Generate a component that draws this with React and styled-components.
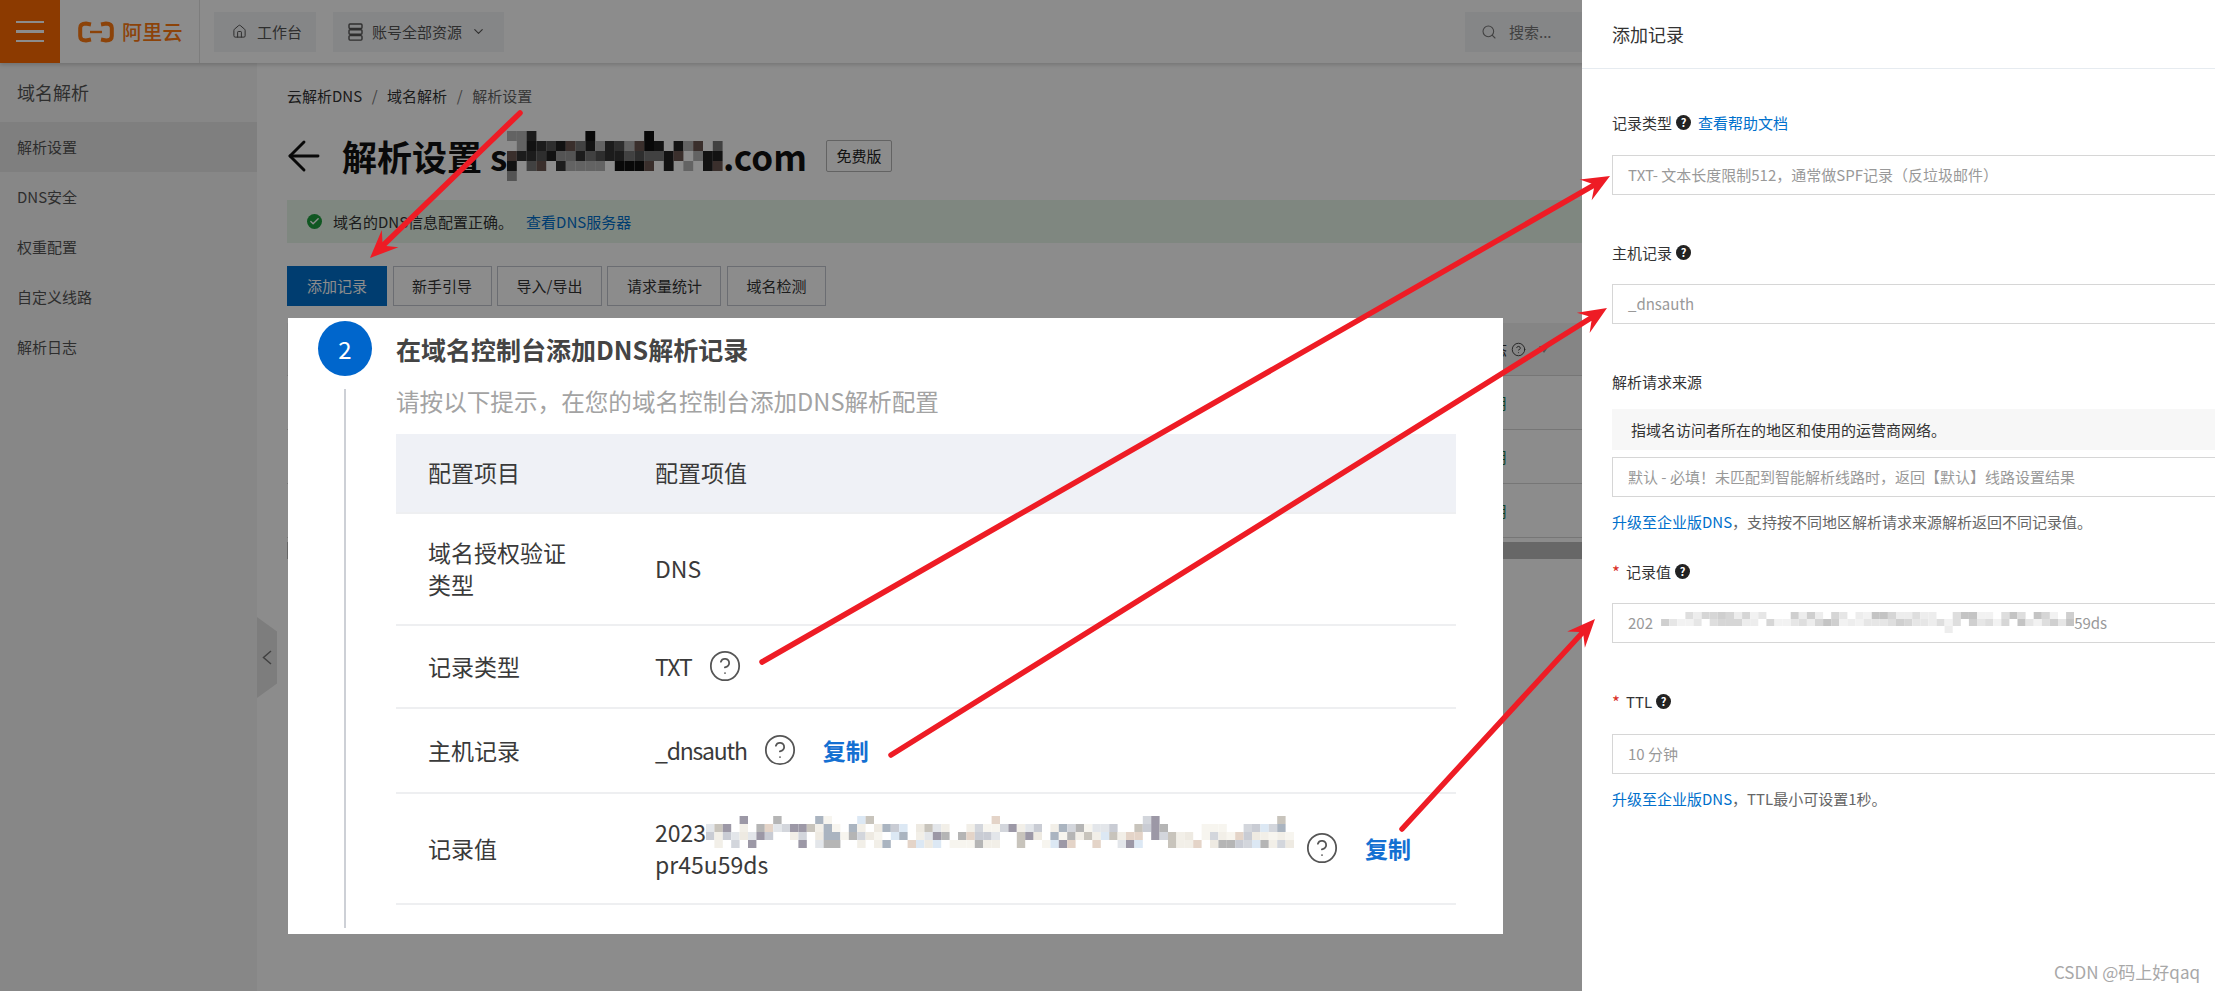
import React from 'react'
import styled, { createGlobalStyle } from 'styled-components'
import { Home, Search, ChevronDown, ArrowLeft, CircleHelp, Check } from 'lucide-react'

const GlobalStyle = createGlobalStyle`
  html, body {
    margin: 0;
    padding: 0;
    background: #fff;
  }
  * {
    box-sizing: border-box;
  }
`

const sideItems = ['解析设置', 'DNS安全', '权重配置', '自定义线路', '解析日志']
const actions = ['添加记录', '新手引导', '导入/导出', '请求量统计', '域名检测']

const arrows = [
  [[520, 113], [370, 258]],
  [[762, 662], [1610, 176]],
  [[891, 755], [1607, 308]],
  [[1402, 829], [1595, 619]],
]

// fake pixelation, same blocks on every render
const Mosaic = ({ cols, rows, cellW, cellH, palette, seed, density }) => {
  let s = seed
  const next = () => {
    s = (s * 1103515245 + 12345) % 2147483648
    return s / 2147483648
  }
  const cells = []
  for (let r = 0; r < rows; r++) {
    for (let c = 0; c < cols; c++) {
      const hit = next()
      const pick = next()
      if (hit < density[r]) {
        cells.push(
          <rect
            key={`${r}-${c}`}
            x={c * cellW}
            y={r * cellH}
            width={cellW}
            height={cellH}
            fill={palette[Math.floor(pick * palette.length)]}
          />
        )
      }
    }
  }
  return (
    <svg width={cols * cellW} height={rows * cellH} style={{ display: 'block', flex: 'none' }}>
      {cells}
    </svg>
  )
}

const Arrow = ({ from, to }) => {
  const len = Math.hypot(to[0] - from[0], to[1] - from[1])
  const dx = (to[0] - from[0]) / len
  const dy = (to[1] - from[1]) / len
  const at = (back, side) => `${to[0] - dx * back - dy * side},${to[1] - dy * back + dx * side}`
  return (
    <g>
      <line
        x1={from[0]}
        y1={from[1]}
        x2={to[0] - dx * 18}
        y2={to[1] - dy * 18}
        stroke="#ee1c25"
        strokeWidth="5.5"
        strokeLinecap="round"
      />
      <polygon
        fill="#ee1c25"
        points={[at(0, 0), at(28, 12), at(20, 2.7), at(20, -2.7), at(28, -12)].join(' ')}
      />
    </g>
  )
}

const Hint = () => <HintDot>?</HintDot>

const HelpIcon = () => <CircleHelp size={34} strokeWidth={1.25} color="#555" />

const App = () => (
  <Page>
    <GlobalStyle />

    <TopBar>
      <MenuButton>
        <MenuLine />
        <MenuLine />
        <MenuLine />
      </MenuButton>
      <Logo>
        <svg width="36" height="22" viewBox="0 0 36 22" fill="none" stroke="#ff7a12" strokeWidth="4">
          <path d="M13 3.5 L8 2.5 Q2.2 2.5 2.2 7 V15 Q2.2 19.5 8 19.5 L13 18.5" />
          <path d="M23 3.5 L28 2.5 Q33.8 2.5 33.8 7 V15 Q33.8 19.5 28 19.5 L23 18.5" />
          <path d="M12 11 H24" strokeWidth="2.4" />
        </svg>
        <LogoText>阿里云</LogoText>
      </Logo>
      <NavButton>
        <Home size={15} strokeWidth={1.6} />
        工作台
      </NavButton>
      <NavButton $wide>
        <svg width="15" height="18" viewBox="0 0 15 18" fill="none" stroke="#555" strokeWidth="1.4">
          <rect x="1" y="1" width="13" height="4.5" rx="1" />
          <rect x="1" y="6.8" width="13" height="4.5" rx="1" />
          <rect x="1" y="12.6" width="13" height="4.5" rx="1" />
        </svg>
        账号全部资源
        <ChevronDown size={15} strokeWidth={1.8} />
      </NavButton>
      <SearchBox>
        <Search size={16} strokeWidth={1.6} />
        搜索...
      </SearchBox>
    </TopBar>

    <Body>
      <Sidebar>
        <SideTitle>域名解析</SideTitle>
        {sideItems.map((item, i) => (
          <SideItem key={item} $active={i === 0}>{item}</SideItem>
        ))}
      </Sidebar>

      <Main>
        <Breadcrumb>
          云解析DNS<Slash>/</Slash>域名解析<Slash>/</Slash><Current>解析设置</Current>
        </Breadcrumb>

        <TitleRow>
          <BackArrow>
            <ArrowLeft size={48} strokeWidth={1.45} />
          </BackArrow>
          <Heading>解析设置 s</Heading>
          <Mosaic
            cols={22}
            rows={5}
            cellW={9.8}
            cellH={10}
            seed={41}
            density={[0.25, 0.75, 0.95, 0.7, 0.12]}
            palette={['#111', '#222', '#333', '#555', '#6b5650', '#777', '#9a9a9a', '#b5b5b5']}
          />
          <Heading>.com</Heading>
          <Badge>免费版</Badge>
        </TitleRow>

        <Notice>
          <CheckDot>
            <Check size={11} strokeWidth={3} color="#fff" />
          </CheckDot>
          域名的DNS信息配置正确。
          <NoticeLink>查看DNS服务器</NoticeLink>
        </Notice>

        <Toolbar>
          {actions.map((label, i) => (
            <ToolButton key={label} $primary={i === 0}>{label}</ToolButton>
          ))}
        </Toolbar>

        <RecordHead>
          <StatusCell>
            状态
            <CircleHelp size={15} strokeWidth={1.4} />
            <SortMark />
          </StatusCell>
        </RecordHead>
        {[1, 2, 3].map(n => (
          <RecordRow key={n}>
            <StatusCell $on>启用</StatusCell>
          </RecordRow>
        ))}
        <ScrollBar />
      </Main>
    </Body>

    <CollapseHandle>
      <svg width="10" height="15" viewBox="0 0 10 15" fill="none" stroke="#777" strokeWidth="1.5">
        <path d="M9 1 L1.5 7.5 L9 14" />
      </svg>
    </CollapseHandle>

    <Mask />

    <GuideCard>
      <StepHead>
        <StepNumber>2</StepNumber>
        <StepTitle>在域名控制台添加DNS解析记录</StepTitle>
      </StepHead>
      <StepBody>
        <StepHint>请按以下提示，在您的域名控制台添加DNS解析配置</StepHint>
        <ConfigTable>
          <ConfigRow $height={80} $head>
            <div>配置项目</div>
            <div>配置项值</div>
          </ConfigRow>
          <ConfigRow $height={112}>
            <ConfigLabel>域名授权验证类型</ConfigLabel>
            <ConfigValue>DNS</ConfigValue>
          </ConfigRow>
          <ConfigRow $height={83}>
            <ConfigLabel>记录类型</ConfigLabel>
            <ConfigValue>
              <NarrowText $amount={-1}>TXT</NarrowText>
              <HelpIcon />
            </ConfigValue>
          </ConfigRow>
          <ConfigRow $height={85}>
            <ConfigLabel>主机记录</ConfigLabel>
            <ConfigValue>
              <NarrowText $amount={-1.2}>_dnsauth</NarrowText>
              <HelpIcon />
              <CopyLink $offset={10}>复制</CopyLink>
            </ConfigValue>
          </ConfigRow>
          <ConfigRow $height={111}>
            <ConfigLabel>记录值</ConfigLabel>
            <ConfigValue $tight>
              <LongValue>
                <LongLine>
                  2023
                  <Mosaic
                    cols={70}
                    rows={4}
                    cellW={8.4}
                    cellH={8}
                    seed={7}
                    density={[0.18, 0.8, 0.85, 0.6]}
                    palette={['#f7f5ef', '#f2efe8', '#eeeae2', '#e3e6ea', '#dce8f4', '#d3d6dc', '#c9ccd4', '#c8c4bc', '#b5b5b5', '#aab4c0', '#e4d4c8', '#9c98a6']}
                  />
                </LongLine>
                <div>pr45u59ds</div>
              </LongValue>
              <HelpIcon />
              <CopyLink $offset={14}>复制</CopyLink>
            </ConfigValue>
          </ConfigRow>
        </ConfigTable>
      </StepBody>
    </GuideCard>

    <Drawer>
      <DrawerHead>添加记录</DrawerHead>
      <DrawerBody>
        <Field>
          <FieldLabel $gap={20}>
            记录类型
            <Hint />
            <FieldLink>查看帮助文档</FieldLink>
          </FieldLabel>
          <InputBox>TXT- 文本长度限制512，通常做SPF记录（反垃圾邮件）</InputBox>
        </Field>

        <Field>
          <FieldLabel>
            主机记录
            <Hint />
          </FieldLabel>
          <InputBox>_dnsauth</InputBox>
        </Field>

        <Field $bottom={29}>
          <FieldLabel $gap={15}>解析请求来源</FieldLabel>
          <SourceNote>指域名访问者所在的地区和使用的运营商网络。</SourceNote>
          <InputBox>默认 - 必填！未匹配到智能解析线路时，返回【默认】线路设置结果</InputBox>
          <HelpText>
            <FieldLink>升级至企业版DNS</FieldLink>，支持按不同地区解析请求来源解析返回不同记录值。
          </HelpText>
        </Field>

        <Field $bottom={49}>
          <FieldLabel>
            <Required>*</Required>
            记录值
            <Hint />
          </FieldLabel>
          <InputBox>
            202
            <Mosaic
              cols={52}
              rows={3}
              cellW={8.1}
              cellH={7}
              seed={19}
              density={[0.72, 0.95, 0.06]}
              palette={['#f2f2f2', '#ededed', '#e6e6e6', '#dedede', '#d6d6d6', '#cfcfcf', '#c4c4c4']}
            />
            59ds
          </InputBox>
        </Field>

        <Field>
          <FieldLabel $gap={20}>
            <Required>*</Required>
            TTL
            <Hint />
          </FieldLabel>
          <InputBox>10 分钟</InputBox>
          <HelpText>
            <FieldLink>升级至企业版DNS</FieldLink>，TTL最小可设置1秒。
          </HelpText>
        </Field>
      </DrawerBody>
    </Drawer>

    <ArrowLayer width="2215" height="991">
      {arrows.map(([from, to], i) => (
        <Arrow key={i} from={from} to={to} />
      ))}
    </ArrowLayer>

    <Watermark>CSDN @码上好qaq</Watermark>
  </Page>
)

export default App

const fontStack = '"Noto Sans CJK SC", "Noto Sans", sans-serif'

const Page = styled.div`
  position: relative;
  width: 2215px;
  height: 991px;
  overflow: hidden;
  display: flex;
  flex-direction: column;
  font-family: ${fontStack};
  font-size: 15px;
  color: #333;
`

const TopBar = styled.header`
  position: relative;
  z-index: 1;
  flex: none;
  display: flex;
  align-items: center;
  height: 63px;
  background: #fff;
  box-shadow: 0 2px 4px rgba(0, 0, 0, 0.16);
`

const MenuButton = styled.div`
  display: flex;
  flex-direction: column;
  justify-content: center;
  gap: 7px;
  width: 60px;
  height: 63px;
  padding: 0 16px;
  background: #ff6a00;
`

const MenuLine = styled.div`
  height: 2.5px;
  background: #fff;
`

const Logo = styled.div`
  display: flex;
  align-items: center;
  gap: 8px;
  width: 140px;
  height: 63px;
  padding-left: 18px;
  border-right: 1px solid #e3e3e3;
`

const LogoText = styled.span`
  font-size: 20px;
  line-height: 22px;
  font-weight: 500;
  letter-spacing: 0.3px;
  color: #ff7a12;
`

const NavButton = styled.div`
  display: flex;
  align-items: center;
  gap: ${p => (p.$wide ? '9px' : '10px')};
  width: ${p => (p.$wide ? '171px' : '102px')};
  height: 40px;
  margin-left: ${p => (p.$wide ? '17px' : '14px')};
  padding-left: ${p => (p.$wide ? '15px' : '18px')};
  background: #f3f4f6;
  font-size: 15px;
  color: #555;
`

const SearchBox = styled.div`
  display: flex;
  align-items: center;
  gap: 12px;
  width: 750px;
  height: 40px;
  margin-left: auto;
  padding-left: 16px;
  background: #f3f4f6;
  color: #777;
`

const Body = styled.div`
  flex: 1;
  display: flex;
  min-height: 0;
`

const Sidebar = styled.nav`
  flex: none;
  width: 257px;
  background: #f6f6f6;
`

const SideTitle = styled.div`
  height: 59px;
  padding-left: 17px;
  font-size: 18px;
  line-height: 59px;
  color: #555;
`

const SideItem = styled.div`
  height: 50px;
  padding-left: 17px;
  line-height: 50px;
  color: #555;
  background: ${p => (p.$active ? '#e8e8e8' : 'transparent')};
`

const Main = styled.main`
  flex: 1;
  min-width: 0;
  padding: 21px 0 0 30px;
`

const Breadcrumb = styled.div`
  display: flex;
  align-items: center;
  height: 22px;
  color: #333;
`

const Slash = styled.span`
  width: 25px;
  text-align: center;
  color: #777;
`

const Current = styled.span`
  color: #666;
`

const TitleRow = styled.div`
  display: flex;
  align-items: center;
  height: 38px;
  margin-top: 31px;
`

const BackArrow = styled.span`
  display: flex;
  margin: 0 14px 0 -7px;
  color: #111;
`

const Heading = styled.h1`
  margin: 0;
  font-size: 35px;
  line-height: 38px;
  font-weight: 700;
  color: #111;
  white-space: pre;
`

const Badge = styled.div`
  width: 66px;
  height: 32px;
  margin-left: 19px;
  border: 1px solid #b4b4b4;
  border-radius: 2px;
  text-align: center;
  line-height: 30px;
  color: #222;
`

const Notice = styled.div`
  display: flex;
  align-items: center;
  height: 43px;
  margin-top: 25px;
  padding-left: 20px;
  background: #e8f6e9;
`

const CheckDot = styled.span`
  display: flex;
  align-items: center;
  justify-content: center;
  width: 15px;
  height: 15px;
  margin-right: 11px;
  border-radius: 50%;
  background: #1e9e3e;
`

const NoticeLink = styled.span`
  margin-left: 13px;
  color: #0070cc;
`

const Toolbar = styled.div`
  display: flex;
  gap: 5.5px;
  height: 40px;
  margin-top: 23px;
`

const ToolButton = styled.div`
  padding: 0 ${p => (p.$primary ? '19px' : '18.5px')};
  border: 1px solid ${p => (p.$primary ? '#0070cc' : '#c4c6cf')};
  background: ${p => (p.$primary ? '#0070cc' : 'transparent')};
  line-height: 38px;
  color: ${p => (p.$primary ? '#fff' : '#333')};
`

const RecordHead = styled.div`
  display: flex;
  align-items: center;
  height: 53px;
  margin-top: 17px;
  border-bottom: 1px solid #d8d8d8;
  background: #f2f2f2;
`

const RecordRow = styled.div`
  display: flex;
  align-items: center;
  height: 54px;
  border-bottom: 1px solid #d8d8d8;
`

const StatusCell = styled.div`
  display: flex;
  align-items: center;
  gap: 4px;
  margin-left: 1190px;
  color: ${p => (p.$on ? '#1a7a4a' : '#333')};
`

const SortMark = styled.span`
  margin-left: 9px;
  border-top: 7px solid #999;
  border-left: 5px solid transparent;
  border-right: 5px solid transparent;
`

const ScrollBar = styled.div`
  height: 17px;
  margin-top: 4px;
  background: #bcbcbc;
`

const CollapseHandle = styled.div`
  position: absolute;
  top: 617px;
  left: 257px;
  display: flex;
  align-items: center;
  justify-content: center;
  width: 20px;
  height: 81px;
  background: #e4e4e4;
  clip-path: polygon(0 0, 100% 18%, 100% 82%, 0 100%);
`

const Mask = styled.div`
  position: absolute;
  inset: 0;
  z-index: 2;
  background: rgba(0, 0, 0, 0.45);
`

const GuideCard = styled.section`
  position: absolute;
  top: 318px;
  left: 288px;
  z-index: 3;
  width: 1215px;
  padding: 3px 0 6px 30px;
  background: #fff;
`

const StepHead = styled.div`
  display: flex;
  align-items: center;
  gap: 24px;
`

const StepNumber = styled.div`
  width: 54px;
  height: 55px;
  border-radius: 50%;
  background: #0066cc;
  text-align: center;
  font-size: 24px;
  line-height: 55px;
  color: #fff;
`

const StepTitle = styled.h2`
  margin: 0;
  font-size: 25px;
  line-height: 34px;
  font-weight: 700;
  color: #444;
`

const StepBody = styled.div`
  margin: 23px 0 0 26px;
  padding: 0 47px 23px 50px;
  border-left: 2px solid #cdd0d6;
`

const StepHint = styled.p`
  margin: -10px 0 0;
  font-size: 23.6px;
  line-height: 24px;
  color: #a3a3a3;
`

const ConfigTable = styled.div`
  margin-top: 21px;
  font-size: 23px;
  color: #3a3a3a;
`

const ConfigRow = styled.div`
  display: grid;
  grid-template-columns: 227px 1fr;
  align-items: center;
  height: ${p => p.$height}px;
  padding: 0 0 2px 32px;
  border-bottom: 2px solid #eeeff1;
  background: ${p => (p.$head ? '#eff1f6' : 'transparent')};
`

const ConfigLabel = styled.div`
  width: 150px;
  line-height: 32px;
`

const ConfigValue = styled.div`
  display: flex;
  align-items: center;
  gap: ${p => (p.$tight ? '12px' : '16px')};
  line-height: 32px;
`

const NarrowText = styled.span`
  letter-spacing: ${p => p.$amount}px;
`

const LongValue = styled.div`
  width: 638px;
`

const LongLine = styled.div`
  display: flex;
  align-items: center;
`

const CopyLink = styled.span`
  margin-left: ${p => p.$offset}px;
  font-weight: 700;
  color: #1470d2;
`

const Drawer = styled.aside`
  position: absolute;
  top: 0;
  right: 0;
  bottom: 0;
  z-index: 4;
  width: 633px;
  overflow: hidden;
  background: #fff;
`

const DrawerHead = styled.div`
  height: 69px;
  padding-left: 30px;
  border-bottom: 1px solid #e6ebf0;
  font-size: 18px;
  line-height: 68px;
  color: #333;
`

const DrawerBody = styled.div`
  margin-right: -20px;
  padding: 44px 0 0 30px;
`

const Field = styled.div`
  margin-bottom: ${p => p.$bottom ?? 48}px;
`

const FieldLabel = styled.div`
  display: flex;
  align-items: center;
  gap: 4px;
  height: 22px;
  padding-bottom: 3px;
  margin-bottom: ${p => p.$gap ?? 19}px;
  color: #333;
`

const Required = styled.span`
  margin-right: 2px;
  font-size: 17px;
  line-height: 22px;
  color: #d93026;
`

const HintDot = styled.span`
  display: inline-block;
  width: 15px;
  height: 15px;
  border-radius: 50%;
  background: #222;
  text-align: center;
  font-size: 11px;
  line-height: 15px;
  font-weight: 700;
  color: #fff;
`

const FieldLink = styled.span`
  color: #0070cc;

  ${FieldLabel} & {
    margin-left: 3px;
  }
`

const InputBox = styled.div`
  display: flex;
  align-items: center;
  height: 40px;
  padding: 0 0 2px 15px;
  border: 1px solid #d6d6d6;
  color: #999;
`

const SourceNote = styled.div`
  height: 41px;
  margin-bottom: 7px;
  padding-left: 19px;
  background: #f7f7f7;
  line-height: 42px;
  color: #333;
`

const HelpText = styled.div`
  margin-top: 14px;
  margin-bottom: 1px;
  line-height: 22px;
  color: #666;
`

const ArrowLayer = styled.svg`
  position: absolute;
  top: 0;
  left: 0;
  z-index: 5;
`

const Watermark = styled.div`
  position: absolute;
  right: 15px;
  bottom: 7px;
  z-index: 5;
  font-size: 17px;
  color: #a8a8a8;
`
